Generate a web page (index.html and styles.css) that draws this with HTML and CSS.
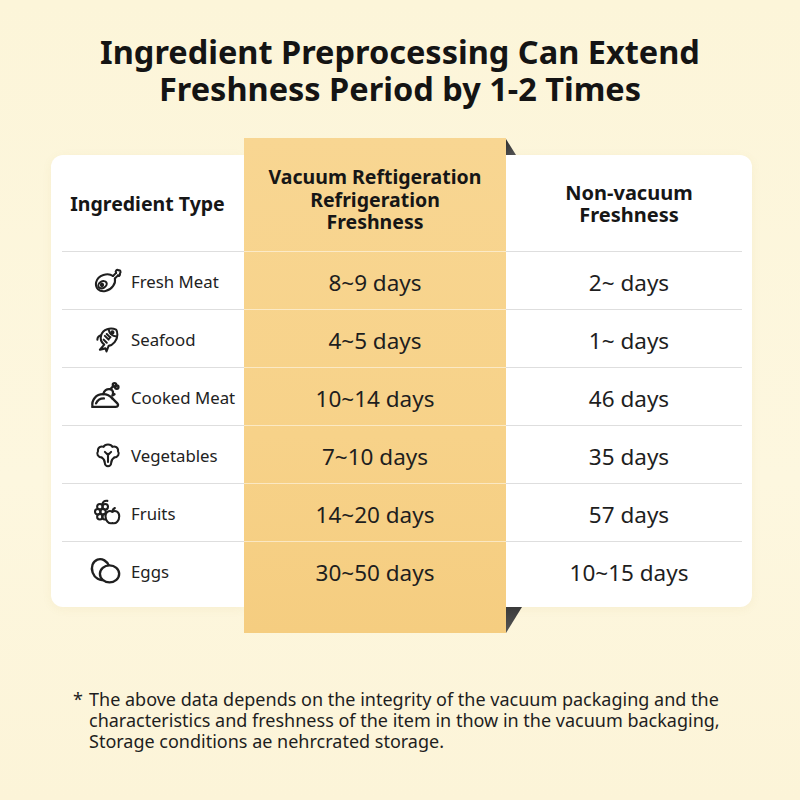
FILE: index.html
```html
<!DOCTYPE html>
<html lang="en">
<head>
<meta charset="utf-8">
<title>Ingredient Preprocessing</title>
<link rel="stylesheet" href="styles.css">
</head>
<body>
<div class="page">
  <h1 class="title">Ingredient Preprocessing Can Extend<br>Freshness Period by 1-2 Times</h1>

  <div class="table">
    <div class="col side left">
      <div class="cell head">Ingredient Type</div>
      <div class="cell item">
        <svg class="ico" viewBox="0 0 24 24"><path d="M16 8C12 5 4 7 2.5 13c-1 4.5 2.5 8 7.5 7 5-1 8.5-6 7.5-10"/><ellipse cx="7.6" cy="15" rx="3.6" ry="2.6" transform="rotate(-30 7.6 15)"/><circle class="dot" cx="7.2" cy="15.2" r="0.9"/><path d="M16 8l2.5-2.5M17.5 10L20 7.5"/><path d="M18.5 5.5c-1-1.5.5-3 2-2 1.5-.5 2 1.5 1 2.5.5 1.5-1 2.5-1.5 1.5"/></svg>
        <span>Fresh Meat</span>
      </div>
      <div class="cell item">
        <svg class="ico" viewBox="0 0 24 24"><path d="M18.5 4.5C14 2.5 8 4 6.5 9c-1 3.5.5 6 2.5 7.5L5.5 20.5l4.5-1 .8 2.5 1.7-4.5c3.5-.5 7-4.5 7-9 0-1.5-.3-3-1-4z"/><circle class="dot" cx="15.5" cy="6.8" r=".9"/><path d="M12.5 4.3c.5 3 2.5 5.5 6.5 5.7"/><path d="M9.5 9.5l3 3M11 8l2.5 2.5M8.5 12.5l2.5 2.5M12.5 12l1.5-1.5"/><path d="M6.5 9c-2 .5-3 2-3 3.5"/></svg>
        <span>Seafood</span>
      </div>
      <div class="cell item">
        <svg class="ico wide" viewBox="0 0 24 24"><path d="M2.5 19C1.5 14 5 10 10 10c3 0 5 1.2 6.5 3"/><path d="M2.5 19H19c1.5 0 2-1.5 1-2.5l-3.5-3.5"/><path d="M10 10c.5-2.5 2.5-4 5-3.5l2-2"/><path d="M15 6.5c2 .5 2.5 2.5 1.5 4.5l1.5-1"/><circle cx="18" cy="3.4" r="1.2"/><circle cx="19.6" cy="5" r="1.2"/><path d="M5 16.5c1-2.5 3-3.5 5.5-3.5"/></svg>
        <span>Cooked Meat</span>
      </div>
      <div class="cell item">
        <svg class="ico" viewBox="0 0 24 24"><path d="M7 14c-3 0-4.5-3-3-5-.5-3 2.5-4.5 4.5-3.5 1-2.5 6-2.5 7 0 2-1 5 .5 4.5 3.5 1.5 2 0 5-3 5"/><path d="M7 14c1.5 1 2.5 2.5 2.5 4.5a2.5 2.5 0 005 0c0-2 1-3.5 2.5-4.5"/><path d="M12 17.5V11M9.5 9.5L12 12l2.5-2.5"/></svg>
        <span>Vegetables</span>
      </div>
      <div class="cell item">
        <svg class="ico" viewBox="0 0 24 24"><circle cx="5.5" cy="7" r="2.2"/><circle cx="9.8" cy="7" r="2.2"/><circle cx="3.8" cy="11" r="2.2"/><circle cx="8" cy="11" r="2.2"/><circle cx="5.5" cy="15" r="2.2"/><circle cx="9.5" cy="15" r="2.2"/><path d="M7.5 4.8C8 3 9.5 2 11.5 2.3"/><path class="fillw" d="M15.5 11c-2.5-1.5-5.5 0-5.5 3.5s2.5 6.5 5.5 5.5c3 1 5.5-2 5.5-5.5s-3-5-5.5-3.5z"/><path d="M15.5 11c0-1.5 1-2.5 2-3"/></svg>
        <span>Fruits</span>
      </div>
      <div class="cell item">
        <svg class="ico wide" viewBox="0 0 24 24"><ellipse cx="8.5" cy="11" rx="6.3" ry="7.5" transform="rotate(-20 8.5 11)"/><ellipse class="fillw" cx="14.5" cy="14" rx="6.8" ry="6"/></svg>
        <span>Eggs</span>
      </div>
    </div>

    <div class="col vac">
      <div class="cell head">Vacuum Reftigeration<br>Refrigeration<br>Freshness</div>
      <div class="cell val">8~9 days</div>
      <div class="cell val">4~5 days</div>
      <div class="cell val">10~14 days</div>
      <div class="cell val">7~10 days</div>
      <div class="cell val">14~20 days</div>
      <div class="cell val">30~50 days</div>
    </div>

    <div class="col side right">
      <div class="cell head">Non-vacuum<br>Freshness</div>
      <div class="cell val">2~ days</div>
      <div class="cell val">1~ days</div>
      <div class="cell val">46 days</div>
      <div class="cell val">35 days</div>
      <div class="cell val">57 days</div>
      <div class="cell val">10~15 days</div>
    </div>
  </div>

  <div class="note">
    <span class="star">*</span>
    <p>The above data depends on the integrity of the vacuum packaging and the<br>characteristics and freshness of the item in thow in the vacuum backaging,<br>Storage conditions ae nehrcrated storage.</p>
  </div>
</div>
</body>
</html>
```

FILE: styles.css
```css
* { box-sizing: border-box; }
html, body { margin: 0; padding: 0; }
body {
  width: 800px;
  height: 800px;
  background: linear-gradient(180deg, #fcf5d9 0%, #fdf7df 60%, #fcf4d8 100%);
  font-family: "Noto Sans", "Open Sans", sans-serif;
  color: #1c1c1c;
  overflow: hidden;
}
.page { padding-top: 33px; }
.title {
  margin: 0;
  text-align: center;
  font-size: 32.5px;
  line-height: 37px;
  font-weight: 700;
  color: #141414;
}
.table {
  display: flex;
  align-items: flex-start;
  margin: 31px 0 0 51px;
  width: 701px;
}
.col { display: flex; flex-direction: column; }
.side {
  background: #fff;
  margin-top: 17px;
  padding-bottom: 8px;
  box-shadow: 0 2px 10px rgba(180, 150, 80, 0.08);
}
.left { width: 193px; border-radius: 12px 0 0 12px; }
.right { width: 246px; border-radius: 0 12px 12px 0; }
.vac {
  width: 262px;
  position: relative;
  padding: 17px 0 34px;
  background: linear-gradient(180deg, #f8d692 0%, #f7d289 60%, #f5cd80 100%);
}
.vac::before {
  content: "";
  position: absolute;
  top: 1px;
  right: -10px;
  width: 10px;
  height: 16px;
  background: linear-gradient(135deg, #2e2e2e, #555);
  clip-path: polygon(0 0, 100% 100%, 0 100%);
}
.vac::after {
  content: "";
  position: absolute;
  bottom: 0;
  right: -16px;
  width: 16px;
  height: 26px;
  background: linear-gradient(180deg, #3a3a3a, #555);
  clip-path: polygon(0 0, 100% 0, 0 100%);
}
.cell {
  height: 58px;
  border-top: 1px solid #dedede;
  display: flex;
  align-items: center;
}
.cell.head {
  height: 96px;
  border-top: 0;
  justify-content: center;
  text-align: center;
  font-weight: 700;
  font-size: 19.5px;
  line-height: 22.5px;
  color: #161616;
}
.left .cell { margin-left: 11px; }
.left .cell.head { margin-left: 0; padding-top: 2px; }
.left .item { padding-left: 31px; gap: 8px; font-size: 16.8px; color: #222; }
.right .cell { margin-right: 10px; padding-left: 10px; }
.right .cell.head { margin-right: 0; padding-left: 0; padding-top: 2px; font-size: 20px; }
.vac .cell { border-top-color: rgba(255, 255, 255, 0.5); }
.vac .cell.head { padding-bottom: 6px; }
.val {
  justify-content: center;
  font-size: 22.5px;
  color: #1e1e1e;
  padding-top: 4px;
}
.item span { padding-top: 2px; }
.ico {
  width: 30px;
  height: 30px;
  flex: none;
  fill: none;
  stroke: #1f1f1f;
  stroke-width: 1.65;
  stroke-linecap: round;
  stroke-linejoin: round;
}
.ico.wide { width: 34px; height: 34px; margin-left: -4px; }
.ico .fillw { fill: #fff; }
.ico .dot { fill: #1f1f1f; }
.note {
  display: flex;
  margin: 56px 0 0 73px;
  width: 680px;
  font-size: 18px;
  line-height: 21px;
  color: #1e1e1e;
}
.star { width: 16px; flex: none; }
.note p { margin: 0; white-space: nowrap; }
```
